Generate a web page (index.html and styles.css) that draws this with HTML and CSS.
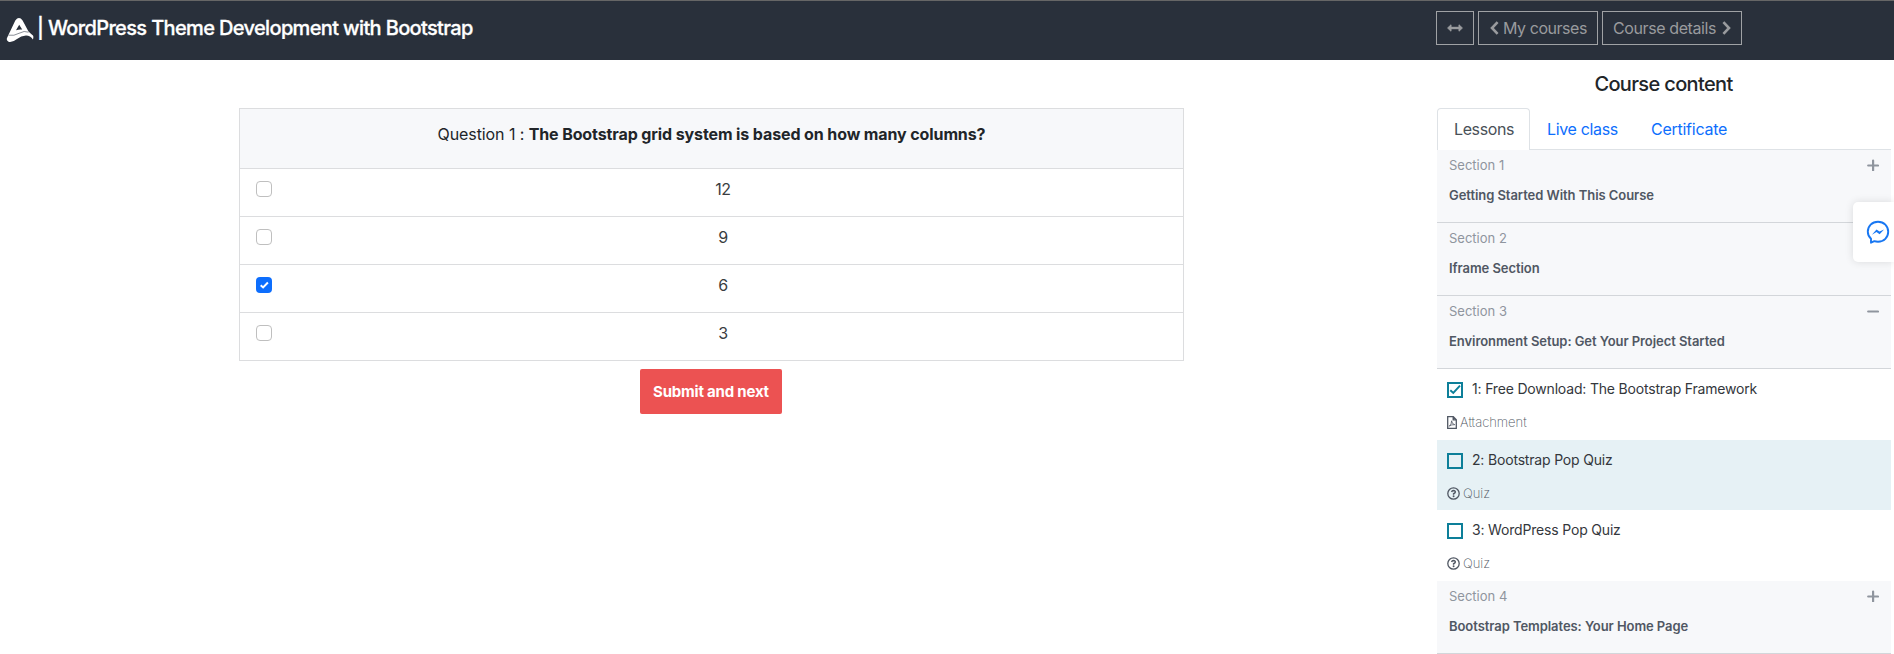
FILE: index.html
```html
<!DOCTYPE html>
<html lang="en">
<head>
<meta charset="utf-8">
<title>WordPress Theme Development with Bootstrap</title>
<link rel="stylesheet" href="styles.css">
</head>
<body>
<header class="topbar">
  <div class="brand">
    <svg class="logo" viewBox="0 0 28 26" width="28" height="26">
      <path d="M1 21 L9.3 3.4 Q13 -1.5 16.6 3.4 L22.5 14.5 Q25 17 27 18.4 Q27.8 20 26.9 22.5 Q24.5 18.8 20 18.6 Q15 18.8 11 22 Q6.500 25.600 3 24.900 Q0 24 1 21Z" fill="#fff"/>
      <path d="M10 13.300 L13.200 7.800 L16.200 12.600 Q13 12.200 10 13.300Z" fill="#29303b"/>
      <path d="M2.500 18.200 Q8 19.200 13 16.300 Q18.500 13.200 22.500 15.200" fill="none" stroke="#7d828b" stroke-width=".9"/>
    </svg>
    <h1 class="course-title">| WordPress Theme Development with Bootstrap</h1>
  </div>
  <nav class="actions">
    <a class="btn btn-resize"><svg width="16" height="8" viewBox="0 0 16 8"><path d="M3 4h10" stroke="currentColor" stroke-width="2.400"/><path d="M.6 4 4 .8v6.400zM15.400 4 12 .8v6.400z" fill="currentColor" stroke="currentColor" stroke-linejoin="round"/></svg></a>
    <a class="btn btn-back"><svg width="9" height="14" viewBox="0 0 9 14"><path d="M7.600 1.200 2 7l5.600 5.800" fill="none" stroke="currentColor" stroke-width="2.600"/></svg><span>My courses</span></a>
    <a class="btn btn-details"><span>Course details</span><svg width="9" height="14" viewBox="0 0 9 14"><path d="M1.400 1.200 7 7l-5.600 5.800" fill="none" stroke="currentColor" stroke-width="2.600"/></svg></a>
  </nav>
</header>
<div class="layout">
  <main class="quiz">
    <form class="question">
      <div class="question-head">Question 1 : <strong>The Bootstrap grid system is based on how many columns?</strong></div>
      <label class="option"><span class="box"></span><span class="answer">12</span></label>
      <label class="option"><span class="box"></span><span class="answer">9</span></label>
      <label class="option"><span class="box box-on"><svg width="16" height="16" viewBox="0 0 16 16"><path d="M4.700 8.200 7.100 10.400 11.900 5.500" fill="none" stroke="#fff" stroke-width="2"/></svg></span><span class="answer">6</span></label>
      <label class="option"><span class="box"></span><span class="answer">3</span></label>
    </form>
    <button class="submit" type="button">Submit and next</button>
  </main>
  <aside class="sidebar">
    <h2 class="sidebar-title">Course content</h2>
    <nav class="tabs">
      <a class="tab tab-active">Lessons</a>
      <a class="tab tab-live">Live class</a>
      <a class="tab tab-cert">Certificate</a>
    </nav>
    <section class="section">
      <div class="section-label">Section 1<svg width="12" height="12" viewBox="0 0 12 12"><path d="M1.200 6.500h9.800M6.100 1.600v9.800" stroke="currentColor" stroke-width="2.200" stroke-linecap="round"/></svg></div>
      <h3 class="section-title">Getting Started With This Course</h3>
    </section>
    <section class="section">
      <div class="section-label">Section 2</div>
      <h3 class="section-title">Iframe Section</h3>
    </section>
    <section class="section">
      <div class="section-label">Section 3<svg width="12" height="12" viewBox="0 0 12 12"><path d="M1.200 6.500h9.800" stroke="currentColor" stroke-width="2.200" stroke-linecap="round"/></svg></div>
      <h3 class="section-title">Environment Setup: Get Your Project Started</h3>
    </section>
    <div class="lessons">
      <div class="lesson">
        <div class="lesson-name"><span class="check"><svg width="12" height="12" viewBox="0 0 12 12"><path d="M1.300 6.200 4.300 9 11 1.600" fill="none" stroke="#0d7f99" stroke-width="1.900"/></svg></span>1: Free Download: The Bootstrap Framework</div>
        <div class="meta"><svg width="10" height="13" viewBox="0 0 10 13"><path d="M.700 .7h5.600l3 3v8.600H.7zM6.200 .8v3h3" fill="none" stroke="currentColor" stroke-width="1.300"/><path d="M2.200 10.200Q4.700 8.600 4.600 4.800Q4.800 8 7.800 8.700Q4.600 8.300 2.200 10.200Z" fill="none" stroke="currentColor" stroke-width=".8"/></svg><span>Attachment</span></div>
      </div>
      <div class="lesson lesson-current">
        <div class="lesson-name"><span class="check"></span>2: Bootstrap Pop Quiz</div>
        <div class="meta"><svg width="13" height="13" viewBox="0 0 13 13"><g fill="none" stroke="currentColor"><circle cx="6.500" cy="6.500" r="5.700" stroke-width="1.300"/><path d="M4.600 5Q5 3.500 6.500 3.500 8.400 3.600 8.300 5.100 8.100 6 6.600 6.700V7.700" stroke-width="1.500"/></g><circle cx="6.600" cy="9.300" r=".95" fill="currentColor"/></svg><span>Quiz</span></div>
      </div>
      <div class="lesson">
        <div class="lesson-name"><span class="check"></span>3: WordPress Pop Quiz</div>
        <div class="meta"><svg width="13" height="13" viewBox="0 0 13 13"><g fill="none" stroke="currentColor"><circle cx="6.500" cy="6.500" r="5.700" stroke-width="1.300"/><path d="M4.600 5Q5 3.500 6.500 3.500 8.400 3.600 8.300 5.100 8.100 6 6.600 6.700V7.700" stroke-width="1.500"/></g><circle cx="6.600" cy="9.300" r=".95" fill="currentColor"/></svg><span>Quiz</span></div>
      </div>
    </div>
    <section class="section">
      <div class="section-label">Section 4<svg width="12" height="12" viewBox="0 0 12 12"><path d="M1.200 6.500h9.800M6.100 1.600v9.800" stroke="currentColor" stroke-width="2.200" stroke-linecap="round"/></svg></div>
      <h3 class="section-title">Bootstrap Templates: Your Home Page</h3>
    </section>
  </aside>
</div>
<div class="messenger">
  <svg width="24" height="24" viewBox="0 0 24 24"><path d="M5 20.500V22.700L8.300 21.200Q10 21.700 12 21.700C18 21.700 22.200 17.300 22.200 11.800S18 1.700 12 1.700 1.800 6.100 1.800 11.800Q1.800 15.800 5 18.800Z" fill="none" stroke="#1877f2" stroke-width="1.900" stroke-linejoin="round"/><path d="M5.900 14.700 10.500 9.400 13.500 11.600 18.100 9.400 13.600 14.300 10.500 12Z" fill="#1877f2"/></svg>
</div>
</body>
</html>
```
FILE: styles.css
```css
* { box-sizing: border-box; }
body {
  margin: 0;
  height: 654px;
  overflow: hidden;
  background: #fff;
  color: #212529;
  font: 400 16px/24px Inter, "Liberation Sans", sans-serif;
}
h1, h2, h3 { margin: 0; }
svg { display: block; flex: none; }

.topbar {
  display: flex;
  height: 60px;
  border-top: 1px solid #666;
  background: #29303b;
}
.brand { display: flex; align-items: flex-start; width: 1436px; padding: 15px 0 0 6px; }
.logo { margin-top: 1px; }
.course-title {
  margin-left: 3px;
  color: #fff;
  font-size: 20px;
  font-weight: 500;
  line-height: 24px;
  letter-spacing: -.645px;
  -webkit-text-stroke: .3px #fff;
}
.actions { display: flex; gap: 4px; padding-top: 10px; }
.btn {
  display: flex;
  align-items: center;
  height: 34px;
  border: 1px solid #a0a2a5;
  color: #999b9e;
}
.btn-resize { width: 38px; justify-content: center; }
.btn-back { width: 120px; padding-left: 11px; gap: 4px; letter-spacing: -.446px; }
.btn-details { width: 140px; padding-left: 10px; gap: 6px; letter-spacing: -.401px; }

.layout { display: flex; }
.quiz { width: 1437px; padding: 48px 253px 0 239px; }
.question { width: 945px; border: 1px solid #dcdddf; border-bottom: 0; }
.question-head {
  height: 60px;
  padding-top: 13px;
  border-bottom: 1px solid #dcdddf;
  background: #f7f8fa;
  text-align: center;
  letter-spacing: -.09px;
}
.question-head strong { font-weight: 700; letter-spacing: -.11px; }
.option {
  display: flex;
  height: 48px;
  padding: 8px 9px 0 16px;
  border-bottom: 1px solid #dcdddf;
}
.box {
  width: 16px;
  height: 16px;
  margin-top: 4px;
  border: 1px solid #bfbfbf;
  border-radius: 4px;
}
.box-on { border: 0; background: #0d6efd; }
.answer { flex: 1; text-align: center; color: #3a3d40; letter-spacing: -.5px; }
.submit {
  display: block;
  width: 142px;
  height: 45px;
  margin: 8px 0 0 401px;
  padding: 0;
  border: 0;
  border-radius: 2px;
  background: #ec5252;
  color: #fff;
  font: 700 15px/23px Inter, "Liberation Sans", sans-serif;
  letter-spacing: -.2px;
}

.sidebar { width: 454px; padding-top: 12px; }
.sidebar-title {
  padding-right: 1px;
  text-align: center;
  font-size: 20px;
  font-weight: 500;
  line-height: 24px;
  letter-spacing: -.647px;
}
.tabs { display: flex; height: 42px; margin-top: 12px; box-shadow: inset 0 -1px #dee2e6; }
.tab { padding: 9px 0 0 17px; color: #0d6efd; }
.tab-active {
  width: 93px;
  padding: 8px 0 0 16px;
  border: 1px solid #dee2e6;
  border-bottom: 0;
  border-radius: 4px 4px 0 0;
  background: #fff;
  color: #495057;
  letter-spacing: -.385px;
}
.tab-live { width: 104px; padding-left: 17px; letter-spacing: -.34px; }
.tab-cert { letter-spacing: -.255px; }

.section {
  height: 73px;
  padding: 5px 12px 0;
  border-bottom: 1px solid #d3d6da;
  background: #f7f8fa;
  font-size: 13px;
  line-height: 20px;
}
.section-label {
  display: flex;
  justify-content: space-between;
  align-items: center;
  color: #8f959e;
}
.section-title {
  margin-top: 10px;
  color: #505763;
  font-size: 13px;
  font-weight: 600;
  line-height: 20px;
  letter-spacing: -.06px;
}
.lesson { height: 71px; padding: 10px 10px 0; }
.lesson-current { height: 70px; background: #e6f1f5; }
.lesson-name {
  display: flex;
  align-items: flex-start;
  color: #34373c;
  font-size: 14px;
  line-height: 20px;
  letter-spacing: -.18px;
}
.check {
  width: 16px;
  height: 16px;
  margin: 3px 9px 0 0;
  border: 2px solid #0d7f99;
}
.meta {
  display: flex;
  align-items: center;
  gap: 3px;
  margin-top: 13px;
  color: #505763;
  font-size: 13px;
  font-weight: 200;
  line-height: 20px;
}
.meta span { letter-spacing: -.02px; }

/* Floating chat launcher docked to the right edge */
.messenger {
  position: absolute;
  top: 202px;
  right: 0;
  width: 41px;
  height: 60px;
  padding: 18px 0 0 13px;
  border-radius: 5px 0 0 5px;
  background: #fff;
  box-shadow: 0 0 8px rgba(0, 0, 0, .12);
}
```
